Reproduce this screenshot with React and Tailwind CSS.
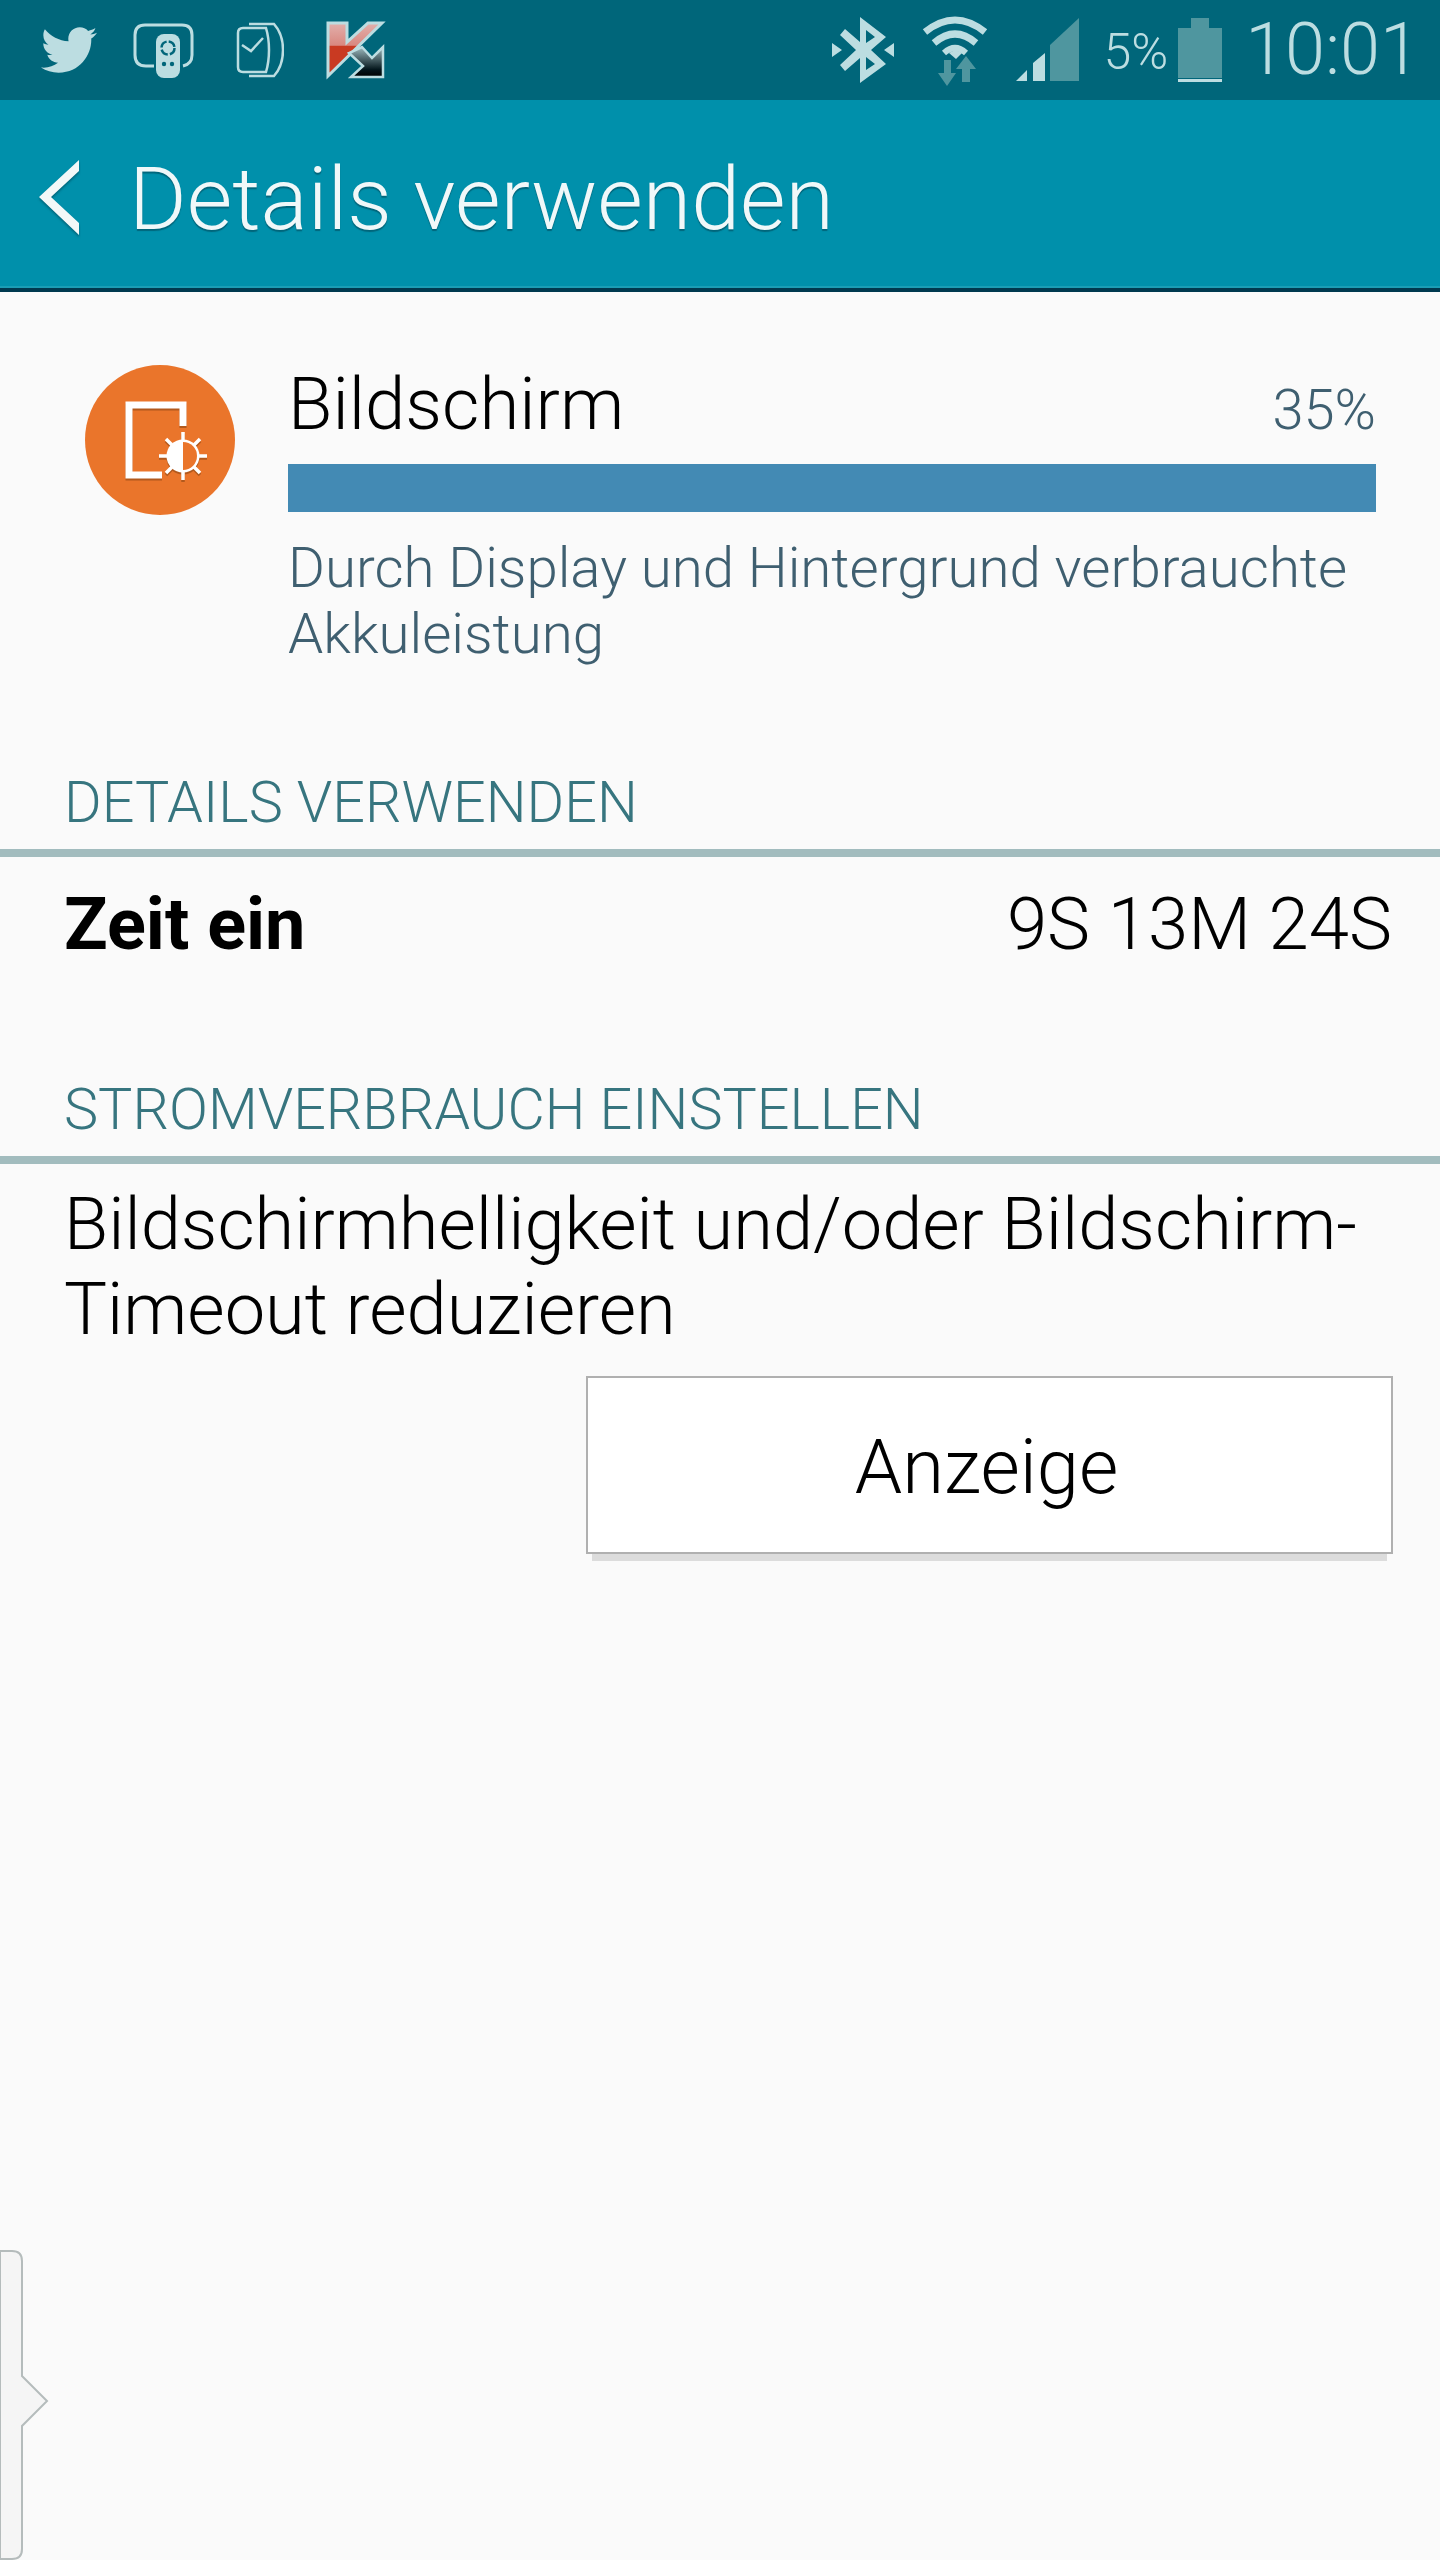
import { FaTwitter } from 'react-icons/fa';

const ICON = '#bcdde1';
const DIM = '#4f969f';
const STATUS_BG = '#00667a';

const RemoteIcon = () => (
  <svg width="61" height="56" viewBox="0 0 61 56" fill="none">
    <path d="M21 44H13Q2 44 2 33V13Q2 3 12 3H49Q59 3 59 13V33Q59 42 50 44" stroke={ICON} strokeWidth="3" />
    <rect x="23" y="12" width="24" height="44" rx="8" fill={ICON} />
    <circle cx="35" cy="26" r="6.5" stroke={STATUS_BG} strokeWidth="2.5" strokeDasharray="8 2.2" />
    <circle cx="31" cy="42" r="2.2" fill={STATUS_BG} />
    <circle cx="39" cy="42" r="2.2" fill={STATUS_BG} />
  </svg>
);

const WatchIcon = () => (
  <svg width="48" height="56" viewBox="0 0 48 56" fill="none" stroke={ICON} strokeWidth="2.5">
    <path d="M13 2H38Q47 12 47 28Q47 44 38 54H13" />
    <path d="M7 6H30Q33 16 33 28Q33 40 30 50H7Q2 50 2 45V11Q2 6 7 6Z" fill={STATUS_BG} />
    <path d="M6 23L15 29L27 16" />
  </svg>
);

const KasperskyIcon = () => (
  <svg width="61" height="60" viewBox="0 0 61 60">
    <defs>
      <linearGradient id="kRed" x1="0" y1="0" x2="0" y2="1">
        <stop offset="0" stopColor="#e2b0ac" />
        <stop offset="0.42" stopColor="#d98880" />
        <stop offset="0.44" stopColor="#c93a22" />
        <stop offset="1" stopColor="#c93a22" />
      </linearGradient>
      <linearGradient id="kDark" x1="0" y1="0" x2="0" y2="1">
        <stop offset="0" stopColor="#9fbcc0" />
        <stop offset="0.75" stopColor="#04161c" />
        <stop offset="1" stopColor="#000" />
      </linearGradient>
    </defs>
    <path d="M3 3H22V22L43 3H57L3 56Z" fill="url(#kRed)" stroke={ICON} strokeWidth="3" />
    <path d="M37 27L47 38L58 27V57H26L38 46L24 33Z" fill="url(#kDark)" stroke={ICON} strokeWidth="2.5" />
  </svg>
);

const BluetoothIcon = () => (
  <svg width="62" height="66" viewBox="0 0 62 66" fill={ICON}>
    <path d="M28 0L54 20L39 33L54 47L28 66V41L13 54L8 48L24 33L8 18L13 12L28 25Z M34 13V26L43 20Z M34 40V53L43 47Z" fillRule="evenodd" />
    <path d="M0 26V40L10 33Z M62 26V40L52 33Z" />
  </svg>
);

const WifiIcon = () => (
  <svg width="66" height="71" viewBox="0 0 66 71" fill="none">
    <path d="M3 17Q33 -7 63 17" stroke={ICON} strokeWidth="7" />
    <path d="M12 28Q33 10 54 28" stroke={ICON} strokeWidth="7" />
    <path d="M22 38Q33 28 44 38" stroke={ICON} strokeWidth="6" />
    <path d="M27 38Q33 33 40 38L34 44Z" fill={ICON} />
    <path d="M22 45H29V58H34L25 71L16 58H22Z" fill={DIM} />
    <path d="M44 41L54 54H48V67H40V54H34Z" fill={DIM} />
  </svg>
);

const SignalIcon = () => (
  <svg width="64" height="64" viewBox="0 0 64 64">
    <path d="M1 63L12 52V63Z M18 45L30 35V63H18Z" fill={ICON} />
    <path d="M35 27L64 0V63H35Z" fill={DIM} />
  </svg>
);

const BatteryIcon = () => (
  <div className="flex flex-col items-center w-[44px] h-[64px]">
    <div className="w-[18px] h-[10px] bg-[#4f969f]" />
    <div className="w-full flex-1 bg-[#4f969f]" />
    <div className="w-full h-[3px] mt-[1px] bg-[#bcdde1]" />
  </div>
);

const SectionHeader = ({ title, className }) => (
  <div className={className}>
    <div className="px-[64px] text-[57.5px] leading-[66px] text-[#37757f] font-light">{title}</div>
    <div className="h-[8px] bg-[#a2bcbe] mt-[13px]" />
  </div>
);

const App = () => {
  return (
    <div className="relative w-[1440px] h-[2560px] bg-[#fafafa] overflow-hidden font-['Roboto',sans-serif]">
      {/* Status bar */}
      <div className="h-[100px] bg-[#00667a] flex items-center pl-[38px] pr-[20px]">
        <FaTwitter className="w-[62px] h-[56px] text-[#bcdde1]" />
        <div className="ml-[33px]"><RemoteIcon /></div>
        <div className="ml-[42px]"><WatchIcon /></div>
        <div className="ml-[41px]"><KasperskyIcon /></div>
        <div className="ml-auto"><BluetoothIcon /></div>
        <div className="ml-[28px]"><WifiIcon /></div>
        <div className="ml-[27px]"><SignalIcon /></div>
        <span className="ml-[24px] text-[50px] leading-none font-light text-[#bcdde1] mt-[4px]">5%</span>
        <div className="ml-[10px]"><BatteryIcon /></div>
        <span className="ml-[23px] text-[72px] leading-none font-light text-[#bcdde1]">10:01</span>
      </div>

      {/* App bar */}
      <div className="h-[188px] bg-[#0090ab] flex items-center pl-[39px] border-b-[2px] border-[#1a9db5]">
        <svg width="40" height="75" viewBox="0 0 40 75" className="mt-[9px] drop-shadow-[0_2px_1px_rgba(0,60,75,0.5)]">
          <path d="M0 37L40 0V11L12 37L40 63V75Z" fill="#f2f8f8" />
        </svg>
        <h1 className="ml-[50px] mt-[12px] text-[88px] leading-none font-light text-[#f0f8f9] [text-shadow:0_2px_1px_rgba(0,60,75,0.5)]">Details verwenden</h1>
      </div>
      <div className="h-[4px] bg-[#00394f]" />

      {/* Usage item */}
      <div className="flex pl-[85px] pr-[64px] pt-[73px]">
        <div className="w-[150px] h-[150px] shrink-0 rounded-full bg-[#ea752b]">
          <svg width="150" height="150" viewBox="0 0 150 150" fill="none" className="drop-shadow-[0_2px_0_rgba(140,70,20,0.6)]">
            <path d="M98 61V40H44V110H77" stroke="#fff" strokeWidth="7" />
            <path d="M98 67V115M74 91H122M81 74L115 108M115 74L81 108" stroke="#fff" strokeWidth="3.5" />
            <circle cx="98" cy="91" r="16.5" fill="#fff" />
            <path d="M98 77A14 14 0 0 1 98 105Z" fill="#ea752b" />
          </svg>
        </div>
        <div className="ml-[53px] flex-1 -mt-[4px]">
          <div className="flex items-baseline justify-between">
            <span className="text-[72.5px] leading-[88px] text-black font-light">Bildschirm</span>
            <span className="text-[56px] leading-[88px] text-[#3f5f70] font-light">35%</span>
          </div>
          <div className="h-[48px] bg-[#438ab4] mt-[10px]" />
          <p className="mt-[23px] text-[56.4px] leading-[66px] text-[#3f5f70] font-light">Durch Display und Hintergrund verbrauchte Akkuleistung</p>
        </div>
      </div>

      <SectionHeader title="DETAILS VERWENDEN" className="mt-[103px]" />

      <div className="flex justify-between pl-[64px] pr-[48px] mt-[25px] text-[72.5px] leading-[86px] text-black">
        <span className="font-bold text-[72px]">Zeit ein</span>
        <span className="font-light">9S 13M 24S</span>
      </div>

      <SectionHeader title="STROMVERBRAUCH EINSTELLEN" className="mt-[109px]" />

      <p className="px-[64px] mt-[18px] text-[72.2px] leading-[85px] text-black font-light">Bildschirmhelligkeit und/oder Bildschirm-Timeout reduzieren</p>

      <div className="flex justify-end pr-[47px] mt-[24px]">
        <button className="w-[807px] h-[178px] pr-[6px] pt-[4px] bg-white border-[2px] border-[#b0b0b0] text-[76px] font-light text-black shadow-[0_13px_0_-6px_#dcdcdc]">Anzeige</button>
      </div>

      {/* Side handle */}
      <svg width="50" height="312" viewBox="0 0 50 312" fill="none" className="absolute left-0 top-[2249px]">
        <path d="M0 2H12Q22 2 22 12V127L47 152L22 177V300Q22 310 12 310H0Z" fill="#f5f5f5" stroke="#b5bcbc" strokeWidth="2" />
      </svg>
    </div>
  );
};

export default App;
